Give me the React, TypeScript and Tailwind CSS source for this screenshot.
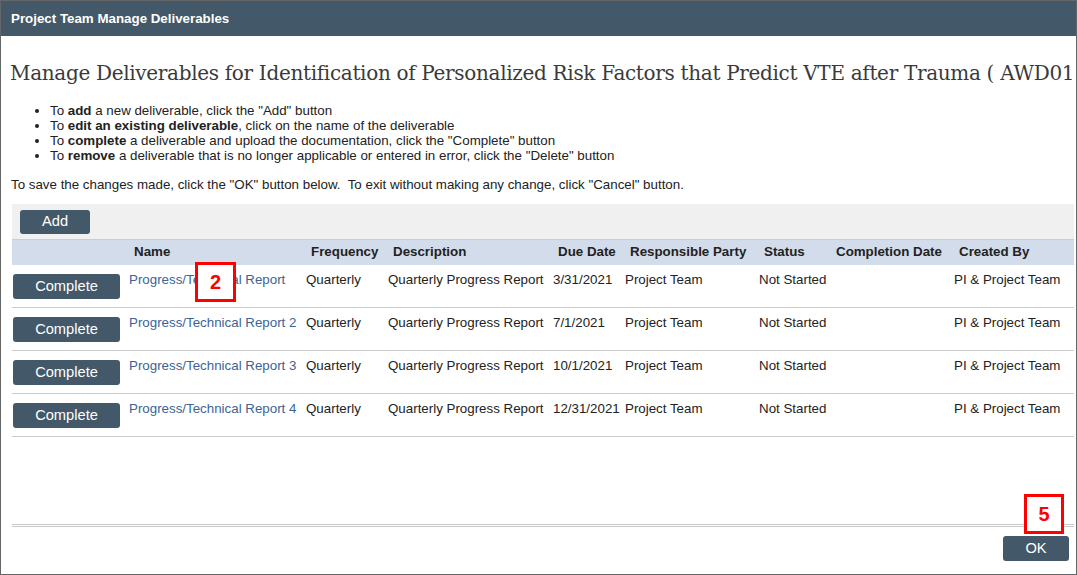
import type { ReactNode } from 'react';

type Deliverable = {
    name: string;
    frequency: string;
    description: string;
    dueDate: string;
    party: string;
    status: string;
    completedOn: string;
    createdBy: string;
};

const deliverables: Deliverable[] = [
    { name: 'Progress/Technical Report', frequency: 'Quarterly', description: 'Quarterly Progress Report', dueDate: '3/31/2021', party: 'Project Team', status: 'Not Started', completedOn: '', createdBy: 'PI & Project Team' },
    { name: 'Progress/Technical Report 2', frequency: 'Quarterly', description: 'Quarterly Progress Report', dueDate: '7/1/2021', party: 'Project Team', status: 'Not Started', completedOn: '', createdBy: 'PI & Project Team' },
    { name: 'Progress/Technical Report 3', frequency: 'Quarterly', description: 'Quarterly Progress Report', dueDate: '10/1/2021', party: 'Project Team', status: 'Not Started', completedOn: '', createdBy: 'PI & Project Team' },
    { name: 'Progress/Technical Report 4', frequency: 'Quarterly', description: 'Quarterly Progress Report', dueDate: '12/31/2021', party: 'Project Team', status: 'Not Started', completedOn: '', createdBy: 'PI & Project Team' },
];

const columns = [
    { label: '', width: 'w-[113px]' },
    { label: 'Name', width: 'w-[177px]' },
    { label: 'Frequency', width: 'w-[82px]' },
    { label: 'Description', width: 'w-[165px]' },
    { label: 'Due Date', width: 'w-[72px]' },
    { label: 'Responsible Party', width: 'w-[134px]' },
    { label: 'Status', width: 'w-[72px]' },
    { label: 'Completion Date', width: 'w-[123px]' },
    { label: 'Created By', width: 'w-[124px]' },
];

const SlateButton = ({ children, className }: { children: ReactNode; className: string }) => (
    <button className={`bg-[#435868] text-white text-[14.67px] leading-none rounded-[3px] ${className}`}>
        {children}
    </button>
);

// red numbered callout box drawn over the dialog
const Callout = ({ n, className }: { n: number; className: string }) => (
    <div className={`absolute border-[3px] border-[#ff0000] bg-white flex items-center justify-center text-[#ff0000] font-bold text-[20px] leading-none ${className}`}>
        {n}
    </div>
);

export default function App() {
    return (
        <div className="w-[1077px] h-[575px] border border-[#666] bg-white flex flex-col overflow-hidden relative font-['Liberation_Sans',Arial,sans-serif] text-[#222]">
            <div className="h-[35px] shrink-0 bg-[#435868] flex items-center pl-[10px]">
                <span className="text-white font-bold text-[13.33px]">Project Team Manage Deliverables</span>
            </div>

            <div className="flex-1 flex flex-col pl-[9px] pr-[2px] overflow-hidden">
                <h1 className="mt-[24px] whitespace-nowrap overflow-hidden text-[20px] leading-[26px] text-[#3a3a3a] font-['DejaVu_Serif',serif] tracking-[-0.32px]">
                    Manage Deliverables for Identification of Personalized Risk Factors that Predict VTE after Trauma ( AWD01703 )
                </h1>

                <ul className="mt-[17px] ml-[25px] list-disc text-[13.33px] leading-[15px] pl-[15px]">
                    <li>To <b>add</b> a new deliverable, click the "Add" button</li>
                    <li>To <b>edit an existing deliverable</b>, click on the name of the deliverable</li>
                    <li>To <b>complete</b> a deliverable and upload the documentation, click the "Complete" button</li>
                    <li>To <b>remove</b> a deliverable that is no longer applicable or entered in error, click the "Delete" button</li>
                </ul>

                <p className="mt-[14px] ml-[1px] text-[13.33px] leading-[15px] whitespace-pre">
                    To save the changes made, click the "OK" button below.  To exit without making any change, click "Cancel" button.
                </p>

                <div className="mt-[12px] ml-[2px] bg-[#f0f0f0] h-[35px] flex items-center pl-[8px]">
                    <SlateButton className="w-[70px] h-[24px]">Add</SlateButton>
                </div>

                <table className="ml-[2px] w-[1062px] table-fixed border-collapse text-[13.33px]">
                    <thead>
                        <tr className="bg-[#d2dcea] h-[25px] border-t border-[#c4cfdd]">
                            {columns.map((c, i) => (
                                <th key={i} className={`${c.width} text-left font-bold pl-[9px] whitespace-nowrap`}>
                                    {c.label}
                                </th>
                            ))}
                        </tr>
                    </thead>
                    <tbody>
                        {deliverables.map((d) => (
                            <tr key={d.name} className="h-[43px] border-b border-[#ccc] align-top">
                                <td className="pl-[1px] pt-[9px]">
                                    <SlateButton className="w-[107px] h-[25px]">Complete</SlateButton>
                                </td>
                                <td className="pl-[4px] pt-[5px] whitespace-nowrap text-[#3b6496]">{d.name}</td>
                                <td className="pl-[4px] pt-[5px] whitespace-nowrap">{d.frequency}</td>
                                <td className="pl-[4px] pt-[5px] whitespace-nowrap">{d.description}</td>
                                <td className="pl-[4px] pt-[5px] whitespace-nowrap">{d.dueDate}</td>
                                <td className="pl-[4px] pt-[5px] whitespace-nowrap">{d.party}</td>
                                <td className="pl-[4px] pt-[5px] whitespace-nowrap">{d.status}</td>
                                <td className="pl-[4px] pt-[5px] whitespace-nowrap">{d.completedOn}</td>
                                <td className="pl-[4px] pt-[5px] whitespace-nowrap">{d.createdBy}</td>
                            </tr>
                        ))}
                    </tbody>
                </table>

                <div className="mt-auto ml-[2px] h-[3px] border-y border-[#c8c8c8]" />
                <div className="h-[47px] shrink-0 flex justify-end items-start pt-[9px] pr-[5px]">
                    <SlateButton className="w-[66px] h-[25px]">OK</SlateButton>
                </div>
            </div>

            <Callout n={2} className="left-[194px] top-[261px] w-[41px] h-[40px]" />
            <Callout n={5} className="left-[1023px] top-[493px] w-[40px] h-[40px]" />
        </div>
    );
}
